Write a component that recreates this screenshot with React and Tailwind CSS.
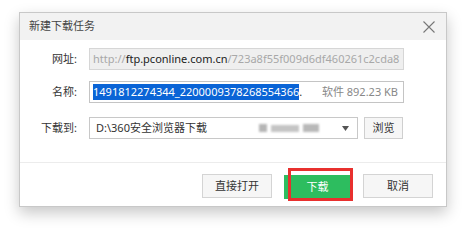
import React from "react";

const cjk = { fontFamily: '"Noto Sans", "Noto Sans CJK SC", sans-serif' };

export default function App() {
  return (
    <div className="w-[465px] h-[233px] bg-white overflow-hidden" style={cjk}>
      <div className="ml-[19px] mt-[12px] w-[428px] h-[195px] border border-[#c8c8c8] bg-white shadow-[0_6px_14px_rgba(0,0,0,0.22)] flex flex-col">
        {/* title */}
        <div className="h-[27px] bg-[#f2f2f2] flex items-center justify-between pl-[9px] pr-[9px] shrink-0">
          <span className="text-[11px] text-[#444]">新建下载任务</span>
          <svg width="14" height="14" viewBox="0 0 14 14" className="mr-[1px]">
            <path d="M1.5 1.5 L12.5 12.5 M12.5 1.5 L1.5 12.5" stroke="#777" strokeWidth="1.1" fill="none" />
          </svg>
        </div>

        {/* form */}
        <div className="flex flex-col pt-[8px] pl-[10px] h-[123px] border-b border-[#ececec] shrink-0">
          <div className="flex items-center h-[22px]">
            <span className="w-[48px] text-right text-[11px] text-[#333] pr-[1px]">网址:</span>
            <div className="ml-[11px] w-[315px] h-[22px] border border-[#d6d6d6] bg-[#efefef] flex items-center pl-[3px] overflow-hidden whitespace-nowrap text-[11px]">
              <span className="text-[#a8a8a8]">http://</span>
              <span className="text-[#222]">ftp.pconline.com.cn</span>
              <span className="text-[#a8a8a8]">/723a8f55f009d6df460261c2cda8</span>
            </div>
          </div>

          <div className="flex items-center h-[22px] mt-[11px]">
            <span className="w-[48px] text-right text-[11px] text-[#333] pr-[1px]">名称:</span>
            <div className="ml-[11px] w-[315px] h-[22px] border border-[#c4c4c4] bg-white flex items-center pl-[3px] pr-[5px] overflow-hidden whitespace-nowrap text-[11px]">
              <span className="bg-[#0a64d6] text-white leading-[16px]">1491812274344_2200009378268554366</span>
              <span className="text-[#333]">.</span>
              <span className="ml-auto text-[#888]">软件 892.23 KB</span>
            </div>
          </div>

          <div className="flex items-center h-[22px] mt-[14px]">
            <span className="w-[48px] text-right text-[11px] text-[#333] pr-[1px]">下载到:</span>
            <div className="ml-[11px] w-[269px] h-[22px] border border-[#c8c8c8] bg-white flex items-center pl-[6px] overflow-hidden whitespace-nowrap text-[11px]">
              <span className="text-[#333]">D:\360安全浏览器下载</span>
              <span className="ml-[52px] flex items-center gap-[4px] blur-[1.2px]">
                <span className="w-[8px] h-[8px] bg-[#b5b5b5]" />
                <span className="w-[28px] h-[7px] bg-[#c4c4c4]" />
                <span className="w-[16px] h-[8px] bg-[#b8b8b8]" />
              </span>
              <svg width="7" height="5" viewBox="0 0 7 5" className="ml-auto mr-[8px]">
                <path d="M0 0 H7 L3.5 5 Z" fill="#555" />
              </svg>
            </div>
            <button className="ml-[6px] w-[39px] h-[22px] border border-[#cfcfcf] bg-[#f6f6f6] text-[11px] text-[#333]">浏览</button>
          </div>
        </div>

        {/* footer */}
        <div className="flex justify-end items-center pt-[10px] pr-[13px] gap-[12px]">
          <button className="w-[70px] h-[24px] border border-[#d4d4d4] bg-[#f6f6f6] text-[11px] text-[#333]">直接打开</button>
          <div className="relative">
            <button className="w-[67px] h-[24px] bg-[#2dbd5f] text-[11px] text-white">下载</button>
            <div className="absolute left-[4px] top-[-5px] w-[65px] h-[33px] border-[3px] border-[#e8302e]" />
          </div>
          <button className="w-[70px] h-[24px] border border-[#d4d4d4] bg-[#f6f6f6] text-[11px] text-[#333]">取消</button>
        </div>
      </div>
    </div>
  );
}
